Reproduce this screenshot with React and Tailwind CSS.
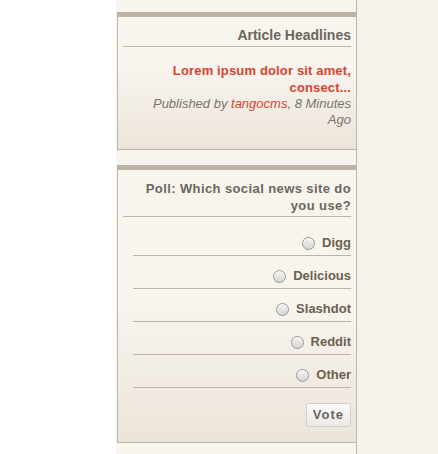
const options = ['Digg', 'Delicious', 'Slashdot', 'Reddit', 'Other'];

function Radio() {
  return (
    <span className="inline-block w-[13px] h-[13px] rounded-full border border-[#9a9690] bg-gradient-to-b from-[#f4f4f4] to-[#d6d6d6] shadow-[inset_0_1px_1px_rgba(255,255,255,0.9)]" />
  );
}

export default function App() {
  return (
    <div className="flex min-h-[454px] w-[438px] bg-white font-['Liberation_Sans',Arial,sans-serif]">
      <div className="w-[116px] bg-white" />
      <div className="w-[241px] bg-[#f8f4ee] border-r border-[#bfb3a6] pt-3">
        {/* Article Headlines */}
        <div className="ml-px border-l border-b border-t-[5px] border-[#bfb3a6] bg-gradient-to-b from-[#f8f4ee] from-40% to-[#ebe4da] pl-[5px] pr-[5px] pb-[21px]">
          <h2 className="pt-[10px] pb-[2px] text-right text-[14px] font-bold text-[#6b665f] border-b border-[#bfb3a6] leading-[17px]">
            Article Headlines
          </h2>
          <div className="pt-[15px] pl-[10px] text-right">
            <a className="block text-[13px] font-bold tracking-[0.15px] text-[#d9432f] leading-[17px]">
              Lorem ipsum dolor sit amet, consect...
            </a>
            <p className="text-[13px] italic text-[#7a746c] leading-[16px]">
              Published by <span className="text-[#d9432f]">tangocms</span>, 8 Minutes Ago
            </p>
          </div>
        </div>

        {/* Poll */}
        <div className="mt-[15px] ml-px border-l border-b border-t-[5px] border-[#bfb3a6] bg-gradient-to-b from-[#f8f4ee] from-50% to-[#ebe4da] pl-[5px] pr-[5px] pb-[15px]">
          <h2 className="pt-[10px] pb-[2px] text-right text-[13px] font-bold tracking-[0.4px] text-[#6b665f] border-b border-[#bfb3a6] leading-[17px]">
            Poll: Which social news site do you use?
          </h2>
          <ul className="ml-[10px] mt-[6px]">
            {options.map((o) => (
              <li key={o} className="flex items-center justify-end gap-[7px] h-[33px] pt-[8px] border-b border-[#bfb3a6]">
                <Radio />
                <span className="text-[13px] font-bold text-[#6e5f4e]">{o}</span>
              </li>
            ))}
          </ul>
          <div className="flex justify-end mt-[15px]">
            <button className="h-[24px] px-[6px] rounded-[2px] border border-[#d3cec6] bg-gradient-to-b from-[#fafafa] to-[#ebe9e5] text-[13px] font-bold tracking-[1px] text-[#6b665f]">
              Vote
            </button>
          </div>
        </div>
      </div>
      <div className="flex-1 bg-[#f6f2ec]" />
    </div>
  );
}
